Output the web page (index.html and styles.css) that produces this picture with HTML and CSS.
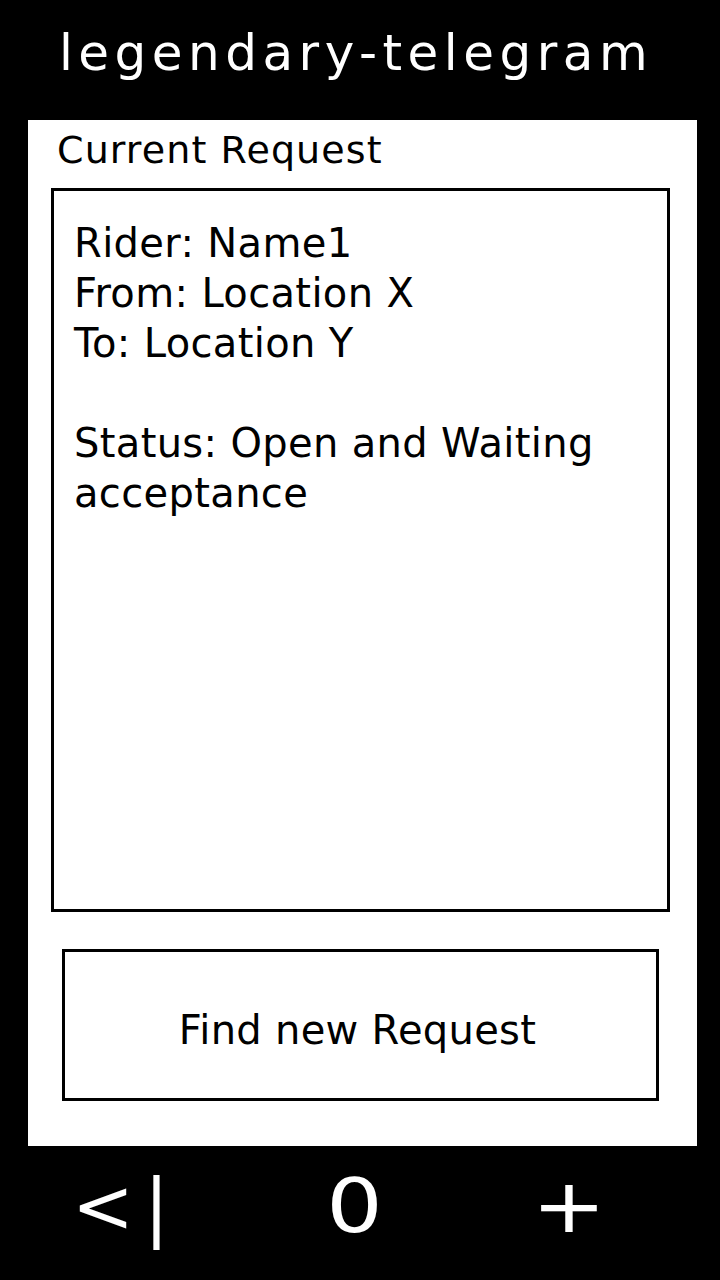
FILE: index.html
```html
<!DOCTYPE html>
<html lang="en">
<head>
    <meta charset="UTF-8">
    <meta name="viewport" content="width=device-width, initial-scale=1.0">
    <title>legendary-telegram</title>
    <link rel="stylesheet" href="styles.css">
</head>
<body>
    <header>
        <h1>legendary-telegram</h1>
    </header>

    <main class="panel">
        <h2>Current Request</h2>

        <div class="request-box">
            <p>Rider: Name1<br>From: Location X<br>To: Location Y</p>
            <p>Status: Open and Waiting acceptance</p>
        </div>

        <button class="find-button">Find new Request</button>
    </main>

    <nav class="bottom-nav">
        <span class="nav-back">&lt;|</span>
        <span class="nav-home"><span class="wide">0</span></span>
        <span class="nav-add"><span class="wide">+</span></span>
    </nav>
</body>
</html>
```

FILE: styles.css
```css
* {
    margin: 0;
    padding: 0;
    box-sizing: border-box;
    font-family: "DejaVu Sans", Verdana, sans-serif;
}
body {
    display: flex;
    flex-direction: column;
    width: 720px;
    height: 1280px;
    background-color: #000;
    color: #000;
}
header {
    height: 120px;
    padding-top: 24px;
    text-align: center;
}
header h1 {
    font-size: 50px;
    font-weight: normal;
    line-height: 58px;
    letter-spacing: 5.5px;
    color: #fff;
    padding-right: 8px;
}
.panel {
    display: flex;
    flex-direction: column;
    height: 1026px;
    margin: 0 23px 0 28px;
    padding: 8px 0 45px;
    background-color: #fff;
}
.panel h2 {
    font-size: 38px;
    font-weight: normal;
    line-height: 44px;
    letter-spacing: 1.1px;
    padding-left: 29px;
    margin-bottom: 16px;
}
.request-box {
    height: 724px;
    margin: 0 27px 0 23px;
    padding: 27px 20px;
    border: 3px solid #000;
}
.request-box p {
    font-size: 40px;
    line-height: 50px;
    letter-spacing: 0.35px;
}
.request-box p + p {
    margin-top: 50px;
}
.find-button {
    display: flex;
    align-items: center;
    justify-content: center;
    height: 152px;
    margin: 37px 38px 0 34px;
    padding: 10px 6px 0 0;
    border: 3px solid #000;
    background-color: #fff;
    font-size: 40px;
    letter-spacing: 0.3px;
    color: #000;
}
.bottom-nav {
    flex: 1;
    display: flex;
    align-items: center;
    color: #fff;
    font-size: 74px;
    padding-bottom: 14px;
}
.nav-back {
    width: 300px;
    padding-left: 72px;
    letter-spacing: 10px;
}
.nav-home {
    width: 200px;
    padding-left: 31px;
}
.nav-add {
    padding-left: 38px;
}
.wide {
    display: inline-block;
    transform: scaleX(1.2);
}
```
